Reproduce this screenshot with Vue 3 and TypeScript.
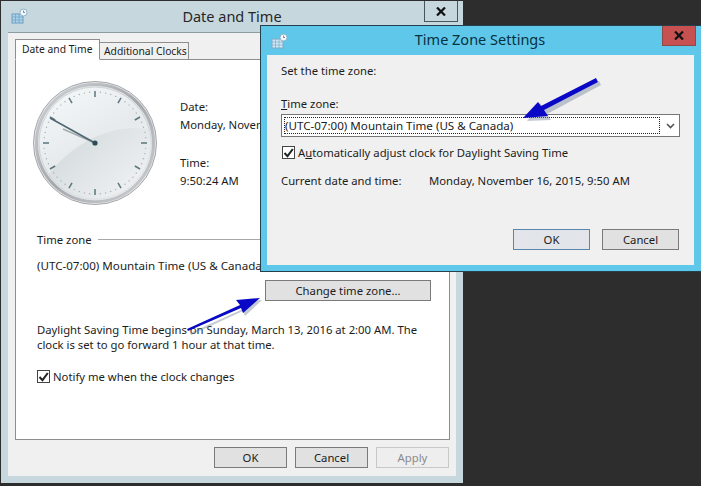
<template>
  <div class="desktop">
    <section class="win win-back">
      <header class="titlebar back-bar">
        <svg class="app-icon" width="17" height="16" viewBox="0 0 17 16">
          <rect x="1" y="6" width="11" height="9" fill="#a9d3ea" stroke="#6f9fc0" />
          <path d="M1 9h11M1 12h11M4.500 6v9M8 6v9" stroke="#6f9fc0" stroke-width="0.7" />
          <circle cx="12.500" cy="4.500" r="3.500" fill="#f4fbff" stroke="#8fb4c8" />
          <path d="M12.500 2.500v2h1.500" stroke="#557" stroke-width="0.7" fill="none" />
        </svg>
        <span class="title">Date and Time</span>
        <button class="close close-back">
          <svg width="10" height="9" viewBox="0 0 10 9"><path d="M1 0.500l8 8M9 0.500l-8 8" stroke="#111" stroke-width="2.200" /></svg>
        </button>
      </header>

      <div class="panel back-panel">
        <div class="tabs">
          <div class="tab tab-active">Date and Time</div>
          <div class="tab">Additional Clocks</div>
        </div>
        <div class="page">
          <div class="clock-row">
            <svg class="clock" width="126" height="126" viewBox="-63 -63 126 126">
              <defs>
                <linearGradient id="ring" x1="0" y1="0" x2="1" y2="1">
                  <stop offset="0" stop-color="#d2d5d8" />
                  <stop offset="0.5" stop-color="#a4a8ac" />
                  <stop offset="1" stop-color="#cfd1d4" />
                </linearGradient>
                <linearGradient id="face" x1="0.200" y1="0" x2="0.800" y2="1">
                  <stop offset="0" stop-color="#f4f7f8" />
                  <stop offset="0.5" stop-color="#e6eaec" />
                  <stop offset="1" stop-color="#f2f4f5" />
                </linearGradient>
                <linearGradient id="sheen" x1="0" y1="0" x2="1" y2="0.700">
                  <stop offset="0" stop-color="#c8d0d3" />
                  <stop offset="1" stop-color="#eef0f1" />
                </linearGradient>
              </defs>
              <circle r="61.500" fill="#e4e6e8" stroke="#a4a7ab" />
              <circle r="58.500" fill="none" stroke="url(#ring)" stroke-width="3" />
              <circle r="56" fill="url(#face)" stroke="#bcc1c4" stroke-width="0.600" />
              <path d="M-47 32A56 56 0 0 0 47 32A56 56 0 0 0 54 -14C30 -17 -10 -14 -47 32Z" fill="url(#sheen)" opacity="0.700" />
              <circle v-for="d in dots" :key="d.id" :cx="d.x" :cy="d.y" r="0.700" fill="#a4aeb2" />
              <line
                v-for="t in ticks"
                :key="t.id"
                :x1="t.x1"
                :y1="t.y1"
                :x2="t.x2"
                :y2="t.y2"
                stroke="#5b767c"
                stroke-width="1.500"
              />
              <line x1="0" y1="0" x2="-32" y2="-14" stroke="#a2acaf" stroke-width="1.500" />
              <line x1="0" y1="0" x2="-45" y2="-25" stroke="#4f6771" stroke-width="1.600" />
              <circle r="2.600" fill="#2b4d58" />
            </svg>
            <dl class="when">
              <dt>Date:</dt>
              <dd>Monday, November 16, 2015</dd>
              <dt>Time:</dt>
              <dd>9:50:24 AM</dd>
            </dl>
          </div>

          <div class="group-head">
            <span>Time zone</span>
            <i class="rule"></i>
          </div>
          <p class="zone-text">(UTC-07:00) Mountain Time (US &amp; Canada)</p>
          <div class="change-row">
            <button class="btn change-btn">Change time zone...</button>
          </div>
          <p class="dst">
            Daylight Saving Time begins on Sunday, March 13, 2016 at 2:00 AM. The<br />
            clock is set to go forward 1 hour at that time.
          </p>
          <label class="check notify">
            <span class="box"><svg width="11" height="10" viewBox="0 0 11 10"><path d="M1.500 5l3 3.200L9.800 1" fill="none" stroke="#222" stroke-width="2" /></svg></span>
            Notify me when the clock changes
          </label>
        </div>
        <footer class="footer-back">
          <button class="btn wide">OK</button>
          <button class="btn wide">Cancel</button>
          <button class="btn wide disabled">Apply</button>
        </footer>
      </div>
    </section>

    <svg class="arrow arrow-back" width="90" height="50" viewBox="180 290 90 50">
      <path d="M188 331L241 307L237 300L260 298L243 314L241 309L189 333Z" fill="#6b7a90" opacity="0.400" transform="translate(2 2)" />
      <path d="M187 329L240 305L236 300L260 298L243 313L241 308L188 331Z" fill="#0808c6" />
    </svg>

    <section class="win win-front">
      <header class="titlebar front-bar">
        <svg class="app-icon" width="17" height="16" viewBox="0 0 17 16">
          <rect x="1" y="6" width="11" height="9" fill="#cfeaf6" stroke="#7fa9c4" />
          <path d="M1 9h11M1 12h11M4.500 6v9M8 6v9" stroke="#7fa9c4" stroke-width="0.7" />
          <circle cx="12.500" cy="4.500" r="3.500" fill="#f4fbff" stroke="#8fb4c8" />
          <path d="M12.500 2.500v2h1.500" stroke="#557" stroke-width="0.7" fill="none" />
        </svg>
        <span class="title front-title">Time Zone Settings</span>
        <button class="close close-front">
          <svg width="10" height="9" viewBox="0 0 10 9"><path d="M1 0.500l8 8M9 0.500l-8 8" stroke="#111" stroke-width="2.200" /></svg>
        </button>
      </header>
      <div class="panel front-panel">
        <p class="set-label">Set the time zone:</p>
        <p class="zone-label"><u>T</u>ime zone:</p>
        <div class="combo">
          <span class="combo-value">(UTC-07:00) Mountain Time (US &amp; Canada)</span>
          <svg class="chevron" width="11" height="8" viewBox="0 0 11 8"><path d="M2 2l3.500 3.500L9 2" fill="none" stroke="#555" stroke-width="1.600" /></svg>
        </div>
        <label class="check auto">
          <span class="box"><svg width="11" height="10" viewBox="0 0 11 10"><path d="M1.500 5l3 3.200L9.800 1" fill="none" stroke="#222" stroke-width="2" /></svg></span>
          <span>A<u>u</u>tomatically adjust clock for Daylight Saving Time</span>
        </label>
        <div class="current">
          <span class="current-label">Current date and time:</span>
          <span>Monday, November 16, 2015, 9:50 AM</span>
        </div>
        <footer class="footer-front">
          <button class="btn wide default">OK</button>
          <button class="btn wide">Cancel</button>
        </footer>
      </div>
    </section>

    <svg class="arrow arrow-front" width="90" height="50" viewBox="515 75 90 50">
      <path d="M599 83L545 112L549 118L525 119L538 101L542 107L597 79Z" fill="#6b7a90" opacity="0.400" transform="translate(2 2)" />
      <path d="M598 82L544 110L548 116L523 118L538 102L541 106L596 78Z" fill="#0808c6" />
    </svg>
  </div>
</template>

<script setup lang="ts">
const polar = (deg: number, r: number) => {
  const a = (deg * Math.PI) / 180
  return { x: Math.sin(a) * r, y: -Math.cos(a) * r }
}

const ticks = Array.from({ length: 12 }, (_, i) => {
  const from = polar(i * 30, 46)
  const to = polar(i * 30, 52)
  return { id: i, x1: from.x, y1: from.y, x2: to.x, y2: to.y }
})

const dots = Array.from({ length: 60 }, (_, i) => ({ id: i, ...polar(i * 6, 51) })).filter(d => d.id % 5 !== 0)
</script>

<style>
html,
body {
  margin: 0;
  overflow: hidden;
  background: #2d2d2d;
}
</style>

<style scoped>
.desktop {
  position: relative;
  width: 701px;
  height: 486px;
  overflow: hidden;
  background: #2d2d2d;
  font-family: "Noto Sans", "Open Sans", sans-serif;
  font-size: 11.300px;
  line-height: 15px;
  color: #1c1c1c;
}

p {
  margin: 0;
  white-space: nowrap;
}

.win {
  position: absolute;
  box-sizing: border-box;
  display: flex;
  flex-direction: column;
}

.win-back {
  left: 1px;
  top: 1px;
  width: 462px;
  height: 482px;
  background: #c6d7de;
}

.win-front {
  left: 260px;
  top: 25px;
  width: 441px;
  height: 247px;
  background: #5fc8ea;
  border: 1px solid #24404d;
  border-right: none;
}

.titlebar {
  position: relative;
  display: flex;
  align-items: center;
  justify-content: center;
  flex-shrink: 0;
}

.back-bar {
  height: 31px;
}

.front-bar {
  height: 29px;
}

.app-icon {
  position: absolute;
  left: 10px;
  top: 7px;
}

.title {
  font-size: 14.500px;
  color: #262626;
  margin-top: -1px;
}

.front-title {
  color: #07313f;
  margin-top: -3px;
  margin-right: 2px;
}

.close {
  position: absolute;
  top: 0;
  display: flex;
  align-items: center;
  justify-content: center;
  padding: 0;
  box-sizing: border-box;
  height: 21px;
  width: 34px;
  background: #c6d7de;
  border: 1px solid #47555c;
  border-top-width: 0;
}

.close-back {
  right: 5px;
}

.close-front {
  right: 5px;
  height: 20px;
  background: #c75050;
  border-color: #8c4a46;
}

.panel {
  box-sizing: border-box;
  flex: 1;
  display: flex;
  flex-direction: column;
  background: #f0f0f0;
}

.back-panel {
  margin: 0 7px 7px 7px;
  padding: 7px 6px 0 7px;
  border-top: 1px solid #8b9ca3;
}

.front-panel {
  margin: 0 7px 6px 6px;
  padding: 8px 15px 0 14px;
}

.tabs {
  display: flex;
  align-items: flex-end;
  height: 20px;
  margin-bottom: -1px;
  position: relative;
}

.tab {
  box-sizing: border-box;
  height: 18px;
  padding: 0 4px;
  width: 89px;
  font-size: 10.300px;
  line-height: 17px;
  background: #f0f0f0;
  border: 1px solid #8e8e8e;
  border-left-width: 0;
  white-space: nowrap;
}

.tab-active {
  position: relative;
  z-index: 1;
  height: 21px;
  width: 85px;
  padding-left: 6px;
  background: #fff;
  border-left-width: 1px;
  border-bottom-color: #fff;
  line-height: 18px;
}

.page {
  box-sizing: border-box;
  height: 381px;
  padding: 0 21px;
  background: #fff;
  border: 1px solid #8e8e8e;
}

.clock-row {
  display: flex;
  align-items: flex-start;
  height: 172px;
  margin-left: -5px;
}

.clock {
  margin-top: 20px;
  flex-shrink: 0;
}

.when {
  margin: 38px 0 0 22px;
  line-height: 18px;
  white-space: nowrap;
}

.when dd {
  margin: 0 0 20px;
}

.group-head {
  display: flex;
  align-items: center;
  gap: 6px;
}

.rule {
  flex: 1;
  height: 1px;
  background: #a8a8a8;
}

.zone-text {
  margin-top: 11px;
  font-size: 11.600px;
}

.change-row {
  display: flex;
  justify-content: flex-end;
  margin: 7px -3px 0 0;
}

.btn {
  box-sizing: border-box;
  padding: 0;
  height: 21px;
  font: inherit;
  color: inherit;
  background: #e1e1e1;
  border: 1px solid #7a7a7a;
}

.change-btn {
  width: 166px;
}

.dst {
  margin-top: 21px;
}

.check {
  display: flex;
  align-items: center;
  gap: 3px;
  white-space: nowrap;
}

.box {
  box-sizing: border-box;
  display: flex;
  align-items: center;
  justify-content: center;
  width: 13px;
  height: 13px;
  background: #fff;
  border: 1px solid #444;
}

.notify {
  margin-top: 17px;
}

.footer-back {
  display: flex;
  justify-content: flex-end;
  gap: 8px;
  margin-top: 7px;
  padding-right: 1px;
}

.wide {
  width: 73px;
}

.disabled {
  color: #8a8a8a;
  background: #eee;
  border-color: #c8c8c8;
}

.zone-label {
  margin-top: 18px;
}

.combo {
  box-sizing: border-box;
  position: relative;
  display: flex;
  align-items: center;
  width: 399px;
  height: 23px;
  margin-top: 3px;
  padding: 2px;
  font-size: 11.600px;
  background: #fff;
  border: 1px solid #767676;
}

.combo-value {
  box-sizing: border-box;
  display: block;
  width: 376px;
  height: 17px;
  line-height: 15px;
  outline: 1px dotted #222;
  outline-offset: -1px;
  padding: 1px;
  white-space: nowrap;
}

.chevron {
  position: absolute;
  right: 3px;
  top: 7px;
}

.auto {
  margin: 8px 0 0 1px;
}

.current {
  display: flex;
  margin-top: 13px;
  white-space: nowrap;
}

.current-label {
  width: 148px;
}

.footer-front {
  display: flex;
  justify-content: flex-end;
  gap: 12px;
  margin-top: 41px;
}

.default {
  background: #e2e6ea;
  border-color: #5a86ad;
}

.footer-front .wide {
  width: 77px;
}

.arrow {
  position: absolute;
  pointer-events: none;
}

.arrow-back {
  left: 180px;
  top: 290px;
}

.arrow-front {
  left: 515px;
  top: 75px;
}
</style>
